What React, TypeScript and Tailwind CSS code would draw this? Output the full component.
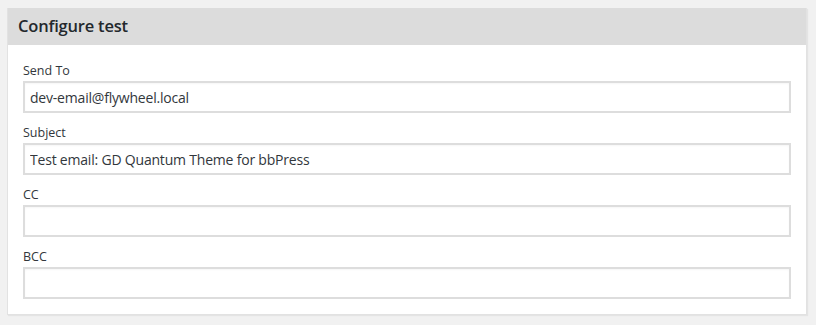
import React from "react";

const fields = [
  { label: "Send To", value: "dev-email@flywheel.local" },
  { label: "Subject", value: "Test email: GD Quantum Theme for bbPress" },
  { label: "CC", value: "" },
  { label: "BCC", value: "" },
];

export default function App() {
  return (
    <div
      className="w-[816px] h-[325px] bg-[#f1f1f1] pt-[8px] pl-[7px]"
      style={{ fontFamily: '"Open Sans", "Noto Sans", sans-serif' }}
    >
      <div className="w-[800px] border border-[#e2e2e2] border-t-0 bg-white shadow-[1px_1px_1px_rgba(0,0,0,0.05)]">
        <div className="h-[37px] bg-[#dcdcdc] flex items-center pl-[10px]">
          <h2 className="text-[16.5px] font-semibold text-[#23282d] leading-none tracking-[-0.2px]">
            Configure test
          </h2>
        </div>
        <div className="pt-[17px] pb-[15px] pl-[15px] pr-[15px]">
          {fields.map((f, i) => (
            <div key={f.label} className={i === 0 ? "" : "mt-[11px]"}>
              <label className="block text-[12.5px] leading-[17px] text-[#32373c] mb-[2px]">
                {f.label}
              </label>
              <input
                readOnly
                value={f.value}
                className="block w-[768px] h-[32px] border-2 border-[#dddddd] bg-white px-[5px] text-[14px] tracking-[-0.2px] text-[#32373c] outline-none shadow-[inset_0_1px_2px_rgba(0,0,0,0.04)]"
                style={{ fontFamily: '"Open Sans", "Noto Sans", sans-serif' }}
              />
            </div>
          ))}
        </div>
      </div>
    </div>
  );
}
